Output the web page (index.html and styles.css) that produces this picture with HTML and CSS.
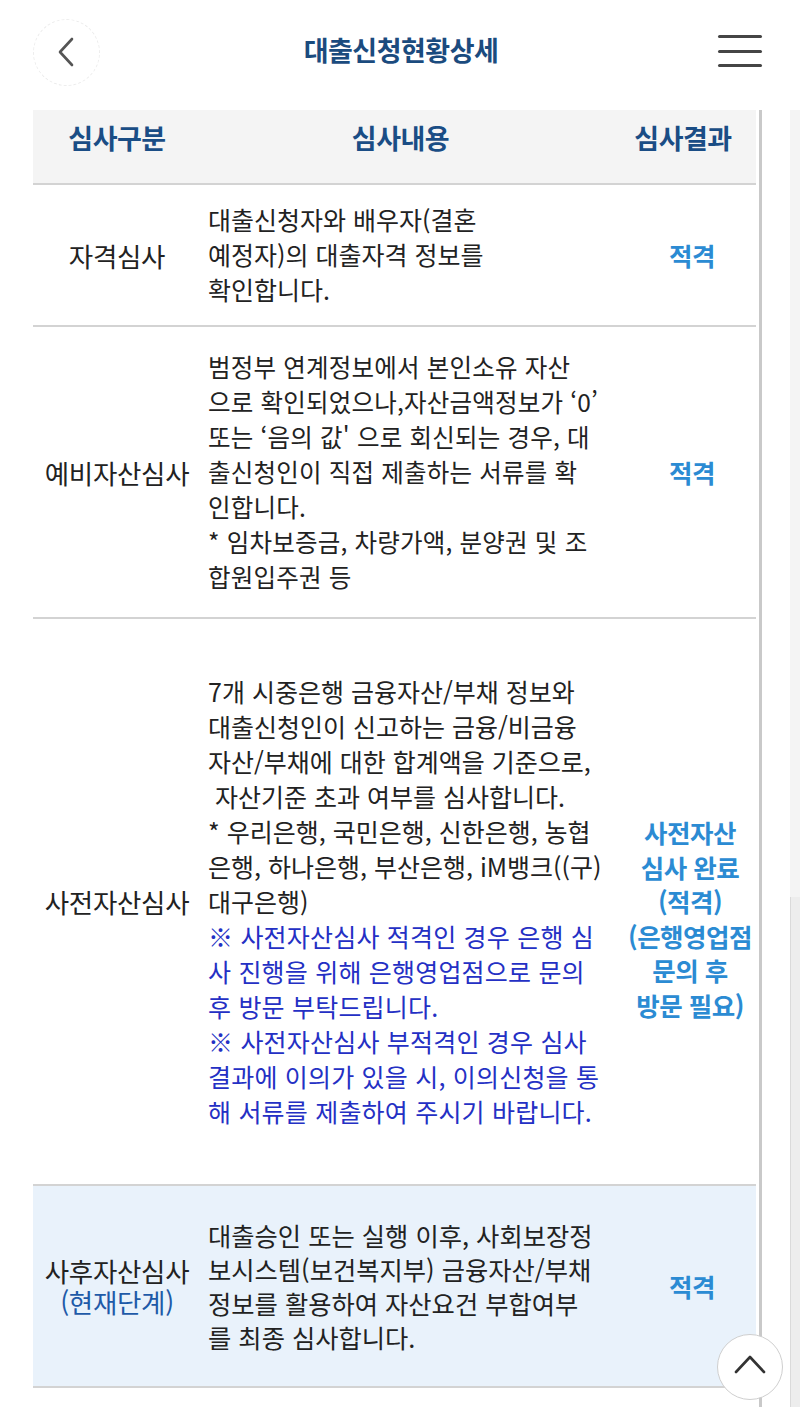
FILE: index.html
```html
<!DOCTYPE html>
<html lang="ko">
<head>
<meta charset="utf-8">
<title>대출신청현황상세</title>
<link rel="stylesheet" href="styles.css">
</head>
<body>
<header class="topbar">
  <button class="back" aria-label="뒤로">
    <svg width="20" height="30" viewBox="0 0 20 30"><polyline points="15,2 3,15 15,28" fill="none" stroke="#555" stroke-width="2.6" stroke-linecap="round" stroke-linejoin="round"/></svg>
  </button>
  <h1 class="title">대출신청현황상세</h1>
  <button class="menu" aria-label="메뉴">
    <span></span><span></span><span></span>
  </button>
</header>

<main class="page">
  <div class="table">
    <div class="row head">
      <div class="cell c1">심사구분</div>
      <div class="cell c2">심사내용</div>
      <div class="cell c3">심사결과</div>
    </div>

    <div class="row r1">
      <div class="cell c1">자격심사</div>
      <div class="cell c2">대출신청자와 배우자(결혼<br>예정자)의 대출자격 정보를<br>확인합니다.</div>
      <div class="cell c3 result">적격</div>
    </div>

    <div class="row r2">
      <div class="cell c1">예비자산심사</div>
      <div class="cell c2">범정부 연계정보에서 본인소유 자산<br>으로 확인되었으나,자산금액정보가 ‘0’<br>또는 ‘음의 값' 으로 회신되는 경우, 대<br>출신청인이 직접 제출하는 서류를 확<br>인합니다.<br>* 임차보증금, 차량가액, 분양권 및 조<br>합원입주권 등</div>
      <div class="cell c3 result">적격</div>
    </div>

    <div class="row r3">
      <div class="cell c1">사전자산심사</div>
      <div class="cell c2">7개 시중은행 금융자산/부채 정보와<br>대출신청인이 신고하는 금융/비금융<br>자산/부채에 대한 합계액을 기준으로,<br>&nbsp;자산기준 초과 여부를 심사합니다.<br>* 우리은행, 국민은행, 신한은행, 농협<br>은행, 하나은행, 부산은행, iM뱅크((구)<br>대구은행)<br><span class="note">※ 사전자산심사 적격인 경우 은행 심<br>사 진행을 위해 은행영업점으로 문의<br>후 방문 부탁드립니다.<br>※ 사전자산심사 부적격인 경우 심사<br>결과에 이의가 있을 시, 이의신청을 통<br>해 서류를 제출하여 주시기 바랍니다.</span></div>
      <div class="cell c3 result multi">사전자산<br>심사 완료<br>(적격)<br>(은행영업점<br>문의 후<br>방문 필요)</div>
    </div>

    <div class="row r4 current">
      <div class="cell c1">사후자산심사<br><span class="stage">(현재단계)</span></div>
      <div class="cell c2">대출승인 또는 실행 이후, 사회보장정<br>보시스템(보건복지부) 금융자산/부채<br>정보를 활용하여 자산요건 부합여부<br>를 최종 심사합니다.</div>
      <div class="cell c3 result">적격</div>
    </div>
  </div>
  <div class="inner-bar"></div>
  <div class="spacer"></div>
  <div class="page-bar"><div class="thumb"></div></div>
</main>

<button class="to-top" aria-label="맨 위로">
  <svg width="32" height="20" viewBox="0 0 32 20"><polyline points="2,18 16,3 30,18" fill="none" stroke="#333" stroke-width="2.6" stroke-linecap="round" stroke-linejoin="round"/></svg>
</button>
</body>
</html>
```

FILE: styles.css
```css
html, body {
  margin: 0;
  padding: 0;
}
body {
  width: 800px;
  height: 1407px;
  overflow: hidden;
  background: #fff;
  font-family: "Noto Sans CJK KR", "Noto Sans", sans-serif;
  color: #222;
  position: relative;
}
button {
  font: inherit;
  background: none;
  border: 0;
  padding: 0;
  cursor: pointer;
}

/* top bar */
.topbar {
  height: 110px;
  display: flex;
  align-items: center;
  justify-content: space-between;
  padding: 0 38px 0 33px;
  box-sizing: border-box;
}
.back {
  width: 67px;
  height: 67px;
  border-radius: 50%;
  border: 1px dashed #ececec;
  box-sizing: border-box;
  display: flex;
  align-items: center;
  justify-content: center;
  margin-top: -6px;
}
.back svg {
  margin-left: 0;
}
.title {
  margin: -12px 0 0 -16px;
  font-size: 27px;
  font-weight: 700;
  letter-spacing: -0.5px;
  color: #1b4b7e;
}
.menu {
  width: 44px;
  height: 32px;
  display: flex;
  flex-direction: column;
  justify-content: space-between;
  margin-top: -8px;
}
.menu span {
  display: block;
  height: 3px;
  background: #454545;
  border-radius: 2px;
}

/* page area */
.page {
  display: flex;
  align-items: stretch;
  padding-left: 33px;
  height: 1297px;
}
.table {
  width: 723px;
  flex: none;
}
.inner-bar {
  width: 3px;
  margin-left: 3px;
  background: #c9c9c9;
  flex: none;
}
.spacer {
  flex: 1;
}
.page-bar {
  width: 10px;
  background: #f4f4f4;
  flex: none;
  display: flex;
  flex-direction: column;
}
.thumb {
  margin-top: 787px;
  flex: 1;
  background: #ededed;
  border-left: 1px solid #dadada;
}

/* table */
.row {
  display: grid;
  grid-template-columns: 168px 419px 136px;
  align-items: center;
  border-bottom: 2px solid #d3d3d3;
}
.cell {
  display: block;
}
.c1 {
  text-align: center;
  font-size: 26.5px;
  line-height: 31px;
  letter-spacing: -0.3px;
  white-space: nowrap;
}
.c2 {
  padding-left: 7px;
  font-size: 24px;
  line-height: 35px;
  white-space: nowrap;
}
.c3 {
  text-align: center;
}
.head {
  background: #f4f4f4;
  height: 75px;
  box-sizing: border-box;
  padding-bottom: 18px;
}
.head .cell {
  font-size: 27px;
  font-weight: 700;
  color: #1a4d85;
  line-height: 32px;
  letter-spacing: -0.5px;
}
.head .c2 {
  text-align: center;
  padding-left: 0;
  padding-right: 20px;
}
.head .c3 {
  padding-right: 10px;
}
.result {
  font-size: 25.5px;
  font-weight: 700;
  color: #2b8bd3;
  line-height: 34.5px;
  padding-left: 8px;
  letter-spacing: -0.5px;
  white-space: nowrap;
}
.multi {
  padding-left: 4px;
  margin-top: 34px;
}
.note {
  color: #2430c4;
  font-size: 25px;
  letter-spacing: 0.2px;
}
.stage {
  color: #1e5aa8;
}
.r1 .c2 { padding-top: 17px; padding-bottom: 18px; font-size: 25px; }
.r2 .c2 { padding-top: 22px; padding-bottom: 23px; font-size: 24.5px; letter-spacing: 0.2px; }
.r3 .c2 { padding-top: 55px; padding-bottom: 55px; font-size: 25px; }
.r4 .c2 { padding-top: 32px; padding-bottom: 32px; line-height: 34px; font-size: 25.3px; }
.current {
  background: #e9f2fb;
}

/* floating scroll-to-top */
.to-top {
  position: absolute;
  left: 717px;
  top: 1334px;
  width: 66px;
  height: 66px;
  border-radius: 50%;
  background: #fff;
  border: 1.5px solid #cfcfcf;
  box-sizing: border-box;
  display: flex;
  align-items: center;
  justify-content: center;
}
.to-top svg {
  margin-top: -6px;
}
```
